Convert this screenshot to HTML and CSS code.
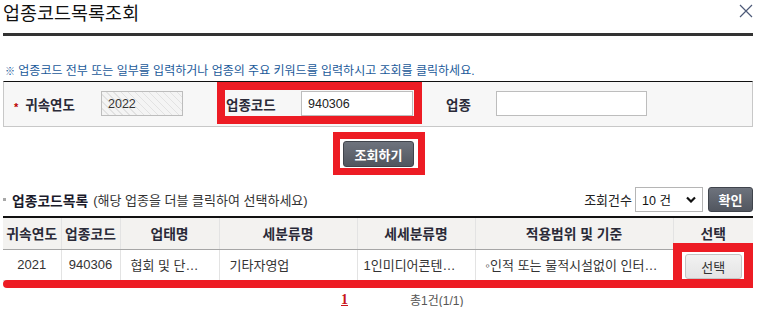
FILE: index.html
```html
<!DOCTYPE html>
<html lang="ko">
<head>
<meta charset="utf-8">
<title>업종코드목록조회</title>
<link rel="stylesheet" href="styles.css">
</head>
<body>
<div class="page">
  <header class="head">
    <h1 class="title">업종코드목록조회</h1>
    <svg class="close" width="14" height="14" viewBox="0 0 14 14"><path d="M1 1L13 13M13 1L1 13" stroke="#4d5a78" stroke-width="1.2" fill="none"/></svg>
  </header>

  <p class="note"><span class="note-icon">※</span> 업종코드 전부 또는 일부를 입력하거나 업종의 주요 키워드를 입력하시고 조회를 클릭하세요.</p>

  <div class="search">
    <span class="lbl lbl-year"><span class="req">*</span>귀속연도</span>
    <span class="inp inp-year inp-disabled">2022</span>
    <span class="hl-group">
      <span class="lbl lbl-code">업종코드</span>
      <span class="inp inp-code">940306</span>
    </span>
    <span class="lbl lbl-ind">업종</span>
    <span class="inp inp-ind"></span>
  </div>

  <div class="btn-area">
    <span class="hl-btn"><button class="btn-dark btn-search">조회하기</button></span>
  </div>

  <div class="list-head">
    <div class="list-title"><span class="bullet"></span><strong>업종코드목록</strong> (해당 업종을 더블 클릭하여 선택하세요)</div>
    <div class="list-ctrl">
      <span class="ctrl-lbl">조회건수</span>
      <span class="sel"><span class="sel-val">10 건</span><svg class="chev" width="10" height="7" viewBox="0 0 10 7"><path d="M1 1.5L5 5.5L9 1.5" stroke="#111" stroke-width="2.2" fill="none"/></svg></span>
      <button class="btn-dark btn-ok">확인</button>
    </div>
  </div>

  <div class="grid-wrap">
    <table class="grid">
      <colgroup>
        <col class="c1"><col class="c2"><col class="c3"><col class="c4"><col class="c5"><col class="c6"><col class="c7">
      </colgroup>
      <thead>
        <tr><th>귀속연도</th><th>업종코드</th><th>업태명</th><th>세분류명</th><th>세세분류명</th><th>적용범위 및 기준</th><th>선택</th></tr>
      </thead>
      <tbody>
        <tr>
          <td class="ctr">2021</td>
          <td class="ctr">940306</td>
          <td class="lft">협회 및 단…</td>
          <td class="lft">기타자영업</td>
          <td class="lft lft5">1인미디어콘텐…</td>
          <td class="lft">◦인적 또는 물적시설없이 인터…</td>
          <td class="ctr"><button class="btn-light">선택</button></td>
        </tr>
      </tbody>
    </table>
    <div class="mark-line"></div>
    <div class="mark-box"></div>
  </div>

  <div class="paging">
    <a class="page-num" href="#">1</a>
    <span class="total">총1건(1/1)</span>
  </div>
</div>
</body>
</html>
```

FILE: styles.css
```css
* { box-sizing: border-box; }
html, body { margin: 0; padding: 0; background: #fff; }
body {
  font-family: "Liberation Sans", "Noto Sans CJK KR", sans-serif;
  color: #333;
  font-size: 13px;
}
.page { padding: 0 5px 0 3px; width: 758px; }

.head {
  display: flex;
  justify-content: space-between;
  align-items: flex-start;
  height: 36px;
  border-bottom: 3px solid #333;
}
.title {
  margin: 0;
  font-size: 18.5px;
  font-weight: normal;
  line-height: 27px;
  color: #111;
}
.close { margin-top: 4px; }

.note {
  margin: 28px 0 2px 0;
  font-size: 12px;
  line-height: 14px;
  color: #1a5a9a;
  padding-left: 2px;
  white-space: nowrap;
}
.note-icon { font-size: 10px; color: #1a5a9a; }

.search {
  display: flex;
  align-items: center;
  height: 46px;
  padding: 9px 0 10px 0;
  background: #f7f7f7;
  border-top: 1px solid #111;
  border-left: 1px solid #c8c8c8;
  border-right: 1px solid #c8c8c8;
  border-bottom: 1px solid #c8c8c8;
}
.lbl {
  font-weight: bold;
  font-size: 13.5px;
  color: #2a2a38;
  white-space: nowrap;
}
.lbl-year { margin-left: 10px; width: 87px; }
.req { color: #b00; font-size: 11px; margin-right: 7px; position: relative; top: 1px; }
.inp {
  display: inline-flex;
  align-items: center;
  height: 25px;
  border: 1px solid #bdbdbd;
  background: #fff;
  padding: 0 0 0 6px;
  font-size: 12.5px;
  color: #222;
}
.inp-year { width: 82px; }
.inp-disabled {
  background: repeating-linear-gradient(45deg, #f4f4f4 0, #f4f4f4 4px, #e2e2e2 4px, #e2e2e2 5px);
  color: #333;
}
.hl-group {
  position: relative;
  display: flex;
  align-items: center;
  margin-left: 43px;
}
.hl-group::after {
  content: "";
  position: absolute;
  left: -9px; right: -9px; top: -9px; bottom: -8px;
  border: 8px solid #ed1c24;
  pointer-events: none;
}
.lbl-code { width: 75px; }
.inp-code { width: 112px; }
.lbl-ind { margin-left: 33px; width: 50px; }
.inp-ind { width: 151px; }

.btn-area {
  display: flex;
  justify-content: center;
  padding: 14px 0 20px 0;
}
.hl-btn {
  position: relative;
  display: flex;
  margin-left: 1px;
}
.hl-btn::after {
  content: "";
  position: absolute;
  left: -10px; right: -11px; top: -9px; bottom: -8px;
  border: 7px solid #ed1c24;
  pointer-events: none;
}
.btn-dark {
  font-family: "Liberation Sans", "Noto Sans CJK KR", sans-serif;
  font-weight: bold;
  color: #fff;
  background: linear-gradient(#6e737d, #51565f);
  border: 1px solid #40444c;
  border-radius: 3px;
  padding: 0;
  cursor: pointer;
}
.btn-search {
  width: 71px;
  height: 26px;
  font-size: 13px;
}

.list-head {
  display: flex;
  justify-content: space-between;
  align-items: center;
  height: 25px;
  margin-bottom: 4px;
}
.list-title {
  display: flex;
  align-items: center;
  font-size: 13px;
  color: #333;
  white-space: nowrap;
}
.list-title strong { font-size: 13.8px; color: #1a1a2a; margin-right: 5px; }
.bullet {
  width: 3px; height: 3px;
  background: #a8a8a8;
  margin: 0 6px 0 0;
}
.list-ctrl { display: flex; align-items: center; }
.ctrl-lbl { font-size: 13px; color: #222; margin-right: 3px; }
.sel {
  display: inline-flex;
  align-items: center;
  justify-content: space-between;
  width: 68px;
  height: 25px;
  border: 1px solid #b5b5b5;
  background: #fff;
  padding: 0 6px 0 6px;
  font-size: 12.5px;
  color: #111;
}
.btn-ok {
  width: 45px;
  height: 25px;
  margin-left: 5px;
  font-size: 13px;
}

.grid-wrap { position: relative; }
.grid {
  width: 750px;
  table-layout: fixed;
  border-collapse: collapse;
  border-top: 2px solid #111;
}
.c1 { width: 58px; } .c2 { width: 59px; } .c3 { width: 99px; } .c4 { width: 138px; }
.c5 { width: 118px; } .c6 { width: 198px; } .c7 { width: 80px; }
.grid th {
  height: 32px;
  background: #f3f2f0;
  font-size: 13.8px;
  font-weight: bold;
  color: #2a2a38;
  border-left: 1px solid #e3e3e3;
  border-right: 1px solid #e3e3e3;
  border-bottom: 1px solid #a6a6a6;
  padding: 0;
  white-space: nowrap;
  overflow: hidden;
}
.grid th:first-child, .grid td:first-child { border-left: none; }
.grid th:last-child, .grid td:last-child { border-right: none; }
.grid td {
  height: 31px;
  font-size: 13px;
  color: #333;
  border-left: 1px solid #e3e3e3;
  border-right: 1px solid #e3e3e3;
  border-bottom: 1px solid #ddd;
  white-space: nowrap;
  overflow: hidden;
  padding: 0;
}
.ctr { text-align: center; }
.lft { padding-left: 10px !important; }
.lft5 { padding-left: 6px !important; }
.btn-light {
  font-family: "Liberation Sans", "Noto Sans CJK KR", sans-serif;
  width: 57px;
  height: 25px;
  font-size: 13px;
  color: #333;
  background: linear-gradient(#f2f2f2, #e4e4e4);
  border: 1px solid #c4c4c4;
  border-radius: 3px;
  padding: 0;
  margin-top: 3px;
}
.mark-line {
  position: absolute;
  left: 0; right: 0;
  top: 64px;
  height: 8px;
  background: #ed1c24;
  border-radius: 4px 0 0 4px;
}
.mark-box {
  position: absolute;
  left: 670px;
  top: 27px;
  width: 80px;
  height: 45px;
  border: 9px solid #ed1c24;
}

.paging {
  display: flex;
  align-items: center;
  padding-left: 338px;
  margin-top: 12px;
  height: 14px;
}
.page-num {
  font-family: "Liberation Serif", serif;
  font-weight: bold;
  font-size: 14px;
  color: #c8151c;
  text-decoration: underline;
}
.total {
  margin-left: 62px;
  font-size: 12px;
  color: #555;
}
```
